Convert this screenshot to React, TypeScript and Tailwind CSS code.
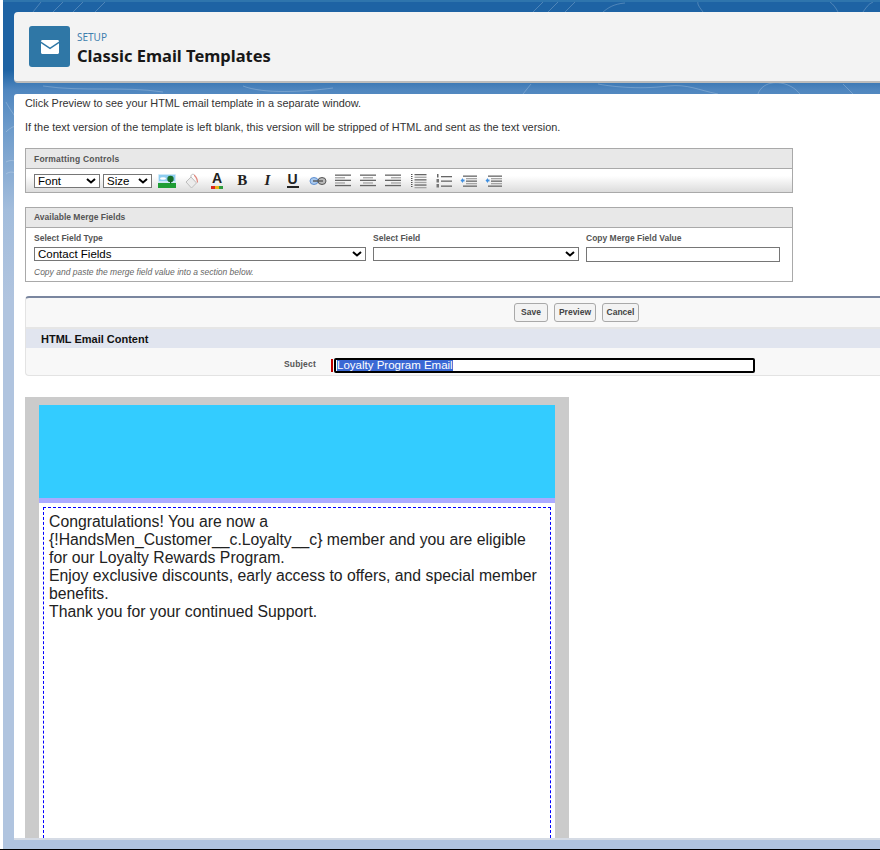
import { ReactNode } from 'react';

const arial = "font-['Liberation_Sans',Arial,sans-serif]";

// horizontal bars used by the align buttons
function Bars({ rows }: { rows: [number, number][] }) {
  return (
    <svg width="20" height="16" viewBox="0 0 20 16">
      {rows.map(([x, w], i) => (
        <rect key={i} x={x} y={1.5 + i * 2.6} width={w} height="1.3" fill={i % 2 ? '#a5a5a5' : '#666'} />
      ))}
    </svg>
  );
}

function ListIcon({ numbered }: { numbered?: boolean }) {
  return (
    <svg width="20" height="16" viewBox="0 0 20 16">
      {numbered ? (
        <>
          <rect x="3" y="1" width="1.500" height="3.500" fill="#666" />
          <rect x="2.500" y="6" width="2.500" height="3.500" fill="#777" />
          <rect x="2.500" y="11" width="2.500" height="3.500" fill="#777" />
          <rect x="7" y="3" width="11" height="1.300" fill="#666" />
          <rect x="7" y="7.500" width="11" height="1.300" fill="#666" />
          <rect x="7" y="12.500" width="11" height="1.300" fill="#666" />
        </>
      ) : (
        <>
          {[1, 3, 5, 7, 9, 11, 13].map((y) => (
            <rect key={y} x="3" y={y} width="1.500" height="1" fill="#555" />
          ))}
          {[1, 3.600, 6.200, 8.800, 11.400, 14].map((y, i) => (
            <rect key={y} x="6.500" y={y} width="12" height="1.300" fill={i % 2 ? '#a5a5a5' : '#666'} />
          ))}
        </>
      )}
    </svg>
  );
}

function IndentIcon() {
  return (
    <svg width="20" height="16" viewBox="0 0 20 16">
      <path d="M1.500 7.500 4 5v1.500h1.500v2H4V10z" fill="#3f8fe0" />
      <rect x="4" y="2.500" width="14" height="1.300" fill="#666" />
      <rect x="7" y="5" width="11" height="1.300" fill="#a5a5a5" />
      <rect x="7" y="7.500" width="11" height="1.300" fill="#666" />
      <rect x="7" y="10" width="11" height="1.300" fill="#a5a5a5" />
      <rect x="4" y="12.500" width="14" height="1.300" fill="#666" />
    </svg>
  );
}

const tools: ReactNode[] = [
  <svg width="18" height="14" viewBox="0 0 18 14" key="img">
    <rect x="0" y="0" width="18" height="14" rx="1" fill="#cfe9f8" />
    <rect x="1" y="1" width="16" height="6" fill="#8dcdf0" />
    <rect x="0" y="9" width="18" height="5" fill="#1f9e35" />
    <circle cx="12.500" cy="5" r="3.200" fill="#17702a" />
    <rect x="12" y="6" width="1.200" height="3.500" fill="#17602a" />
    <ellipse cx="5" cy="4.500" rx="3" ry="1.300" fill="#fff" />
  </svg>,
  <svg width="18" height="18" viewBox="0 0 18 18" key="fill">
    <path d="M3 10 8 5l5.500 6-5 5z" fill="#ececec" stroke="#bdbdbd" />
    <path d="M8 5C7.500 2.500 10 1.500 11.500 3" fill="none" stroke="#bbb" />
    <path d="M11 2.500c2 1 4 4 4 7 .6 1.500-1.500 1.500-1.200 0-.2-2-1.300-4.500-2.800-5.500z" fill="#e0897f" />
  </svg>,
  <div className="flex flex-col items-center" key="color">
    <span className={`${arial} text-[14px] font-bold leading-[13px] text-[#222]`}>A</span>
    <div className="mt-[1px] flex h-[3px] w-[12px]">
      <div className="w-1/3 bg-[#d8261c]" />
      <div className="w-1/3 bg-[#e9b214]" />
      <div className="w-1/3 bg-[#2f9c3d]" />
    </div>
  </div>,
  <span className="font-['Liberation_Serif',serif] text-[15px] font-bold text-[#222]" key="b">B</span>,
  <span className="font-['Liberation_Serif',serif] text-[15px] font-bold italic text-[#222]" key="i">I</span>,
  <div className="flex flex-col items-center" key="u">
    <span className={`${arial} text-[14px] font-bold leading-[12px] text-[#222]`}>U</span>
    <div className="mt-[1px] h-[2px] w-[12px] bg-[#222]" />
  </div>,
  <svg width="18" height="10" viewBox="0 0 18 10" key="link">
    <ellipse cx="5" cy="5" rx="4" ry="3.500" fill="#a9c9ee" stroke="#5f8fd0" />
    <ellipse cx="13" cy="5" rx="4" ry="3.500" fill="#bbb" stroke="#555" />
    <rect x="4" y="4.300" width="10" height="1.400" fill="#555" />
  </svg>,
  <Bars key="l" rows={[[2, 16], [2, 10], [2, 16], [2, 10], [2, 16]]} />,
  <Bars key="c" rows={[[2, 16], [5, 10], [2, 16], [5, 10], [2, 16]]} />,
  <Bars key="r" rows={[[2, 16], [8, 10], [2, 16], [8, 10], [2, 16]]} />,
  <ListIcon key="ul" />,
  <ListIcon key="ol" numbered />,
  <IndentIcon key="out" />,
  <IndentIcon key="in" />,
];

function FieldLabel({ children }: { children: ReactNode }) {
  return <div className="text-[8.500px] font-bold leading-[12px] text-[#555]">{children}</div>;
}

function PageButton({ children, className }: { children: ReactNode; className: string }) {
  return (
    <button className={`flex h-[19px] items-center justify-center rounded-[3px] border border-[#a9a9a9] bg-[#f3f3f3] text-[8.500px] font-bold text-[#444] ${className}`}>
      {children}
    </button>
  );
}

function FakeSelect({ label, className }: { label?: string; className: string }) {
  return (
    <div className={`flex h-[14px] shrink-0 items-center justify-between border border-[#767676] bg-white pr-[3px] pl-[3px] text-[11.500px] leading-[12px] text-black ${className}`}>
      <span>{label}</span>
      <svg width="10" height="6" viewBox="0 0 10 6" fill="none" stroke="#000" strokeWidth="2">
        <path d="M1 1l4 3.500L9 1" />
      </svg>
    </div>
  );
}

export default function App() {
  return (
    <div className={`${arial} relative flex h-[850px] w-[880px] flex-col overflow-hidden border-b border-black bg-white pl-[3px]`}>
      <div className="relative flex h-full flex-col border-t-2 border-[#2f75ad] bg-[linear-gradient(#1e63a4_0px,#1e63a4_68px,#4f86bf_88px,#6f9ccb_128px,#a3bddc_208px,#b0c4df_298px)] pt-[10px] pl-[11px]">
        {/* contour lines in the page background */}
        <svg className="absolute inset-0" width="877" height="300" viewBox="0 0 877 300" fill="none" stroke="#ffffff" strokeOpacity="0.22">
          <path d="M30 10 38 0M50 10 60 0M70 10 80 0M92 10 102 0M530 10 540 0M545 10 555 0M562 10 572 0M600 10c5-4 10-8 22-9M700 10c-3-4-6-8-5-10M835 10c-2-4-5-8-8-10M860 10c3-4 5-8 10-10" />
          <path d="M528 82 520 92M595 82c10 2 40 6 70 2 20-2 30 4 50 8M755 92c4-12 20-14 32-8 6 3 8 6 10 8M840 82l10 10M3 100c4 8 8 12 11 18M3 130c3-3 7-6 11-6M3 160c4-2 7-2 11 0M3 172c4-3 8-2 11 0M40 84c40 6 80 0 120 6M240 84c20 8 60 6 90 2" />
        </svg>

        {/* Page header */}
        <div className="relative flex h-[71px] shrink-0 items-center gap-[7px] rounded-tl-[4px] rounded-bl-[4px] border-b-2 border-[#bcbcbc] bg-[#f3f3f3] pl-[15px]">
          <div className="flex h-[41px] w-[41px] items-center justify-center rounded-[3px] bg-[#2f77a6]">
            <svg width="18" height="14" viewBox="0 0 18 14">
              <path d="M1.500 0h15c.8 0 1.500.6 1.500 1.400L9 7.500 0 1.400C0 .6.700 0 1.500 0z" fill="#fff" />
              <path d="M0 3.200 9 9.300l9-6.100v9.300c0 .8-.7 1.500-1.500 1.500h-15C.7 14 0 13.300 0 12.500z" fill="#fff" />
            </svg>
          </div>
          <div className="pt-[6px]">
            <div className="font-['Noto_Sans',sans-serif] text-[10px] leading-[12px] text-[#3f7fae]">SETUP</div>
            <div className="font-['Noto_Sans',sans-serif] text-[16.500px] font-bold leading-[26px] text-[#181818]">Classic Email Templates</div>
          </div>
        </div>

        {/* Main panel */}
        <div className="relative mt-[11px] mb-[11px] flex min-h-0 flex-1 flex-col overflow-hidden rounded-tl-[3px] bg-white pt-[2px] pl-[11px] shadow-[0_2px_0_#d5dbe5]">
          <p className="text-[10.900px] leading-[14px] text-[#333]">Click Preview to see your HTML email template in a separate window.</p>
          <p className="mt-[10px] text-[10.900px] leading-[14px] text-[#333]">If the text version of the template is left blank, this version will be stripped of HTML and sent as the text version.</p>

          {/* Formatting controls */}
          <div className="mt-[14px] w-[768px] shrink-0 border border-[#a9a9a9]">
            <div className="flex h-[20px] items-center border-b border-[#a9a9a9] bg-[#e8e8e8] pt-[1px] pl-[8px] text-[8.500px] font-bold tracking-[0.2px] text-[#555]">Formatting Controls</div>
            <div className="flex h-[23px] items-center bg-[linear-gradient(#ffffff,#ffffff_30%,#dcdcdc)] pl-[8px]">
              <FakeSelect label="Font" className="w-[66px]" />
              <FakeSelect label="Size" className="ml-[3px] w-[49px]" />
              <div className="ml-[2px] flex items-center">
                {tools.map((tool, i) => (
                  <div key={i} className="flex h-[20px] w-[25.200px] items-center justify-center">{tool}</div>
                ))}
              </div>
            </div>
          </div>

          {/* Merge fields */}
          <div className="mt-[14px] h-[75px] w-[768px] shrink-0 border border-[#a9a9a9]">
            <div className="flex h-[20px] items-center border-b border-[#a9a9a9] bg-[#e8e8e8] pl-[8px] text-[8.500px] font-bold text-[#555]">Available Merge Fields</div>
            <div className="flex pt-[4px] pl-[8px]">
              <div className="w-[339px]">
                <FieldLabel>Select Field Type</FieldLabel>
                <FakeSelect label="Contact Fields" className="mt-[3px] w-[332px]" />
              </div>
              <div className="w-[213px]">
                <FieldLabel>Select Field</FieldLabel>
                <FakeSelect className="mt-[3px] w-[206px]" />
              </div>
              <div>
                <FieldLabel>Copy Merge Field Value</FieldLabel>
                <input readOnly className="mt-[3px] block h-[15px] w-[194px] border border-[#767676] bg-white" />
              </div>
            </div>
            <p className="mt-[4px] pl-[8px] text-[8.500px] italic leading-[12px] text-[#666]">Copy and paste the merge field value into a section below.</p>
          </div>

          {/* Page block, runs past the right edge of the window */}
          <div className="mt-[14px] h-[80px] w-[1102px] shrink-0 overflow-hidden rounded-tl-[4px] rounded-bl-[4px] border-t-2 border-b border-l border-[#e3e3e3] border-t-[#7a869f] bg-[#f8f8f8]">
            <div className="flex h-[31px] items-center justify-center gap-[6px] border-b-2 border-[#e6e6e6]">
              <PageButton className="w-[34px]">Save</PageButton>
              <PageButton className="w-[42px]">Preview</PageButton>
              <PageButton className="w-[37px]">Cancel</PageButton>
            </div>
            <div className="flex h-[19px] items-center bg-[#e1e5ef] pt-[1px] pl-[15px] text-[11px] font-bold text-[#111]">HTML Email Content</div>
            <div className="flex items-center pt-[10px]">
              <div className="w-[290px] pb-[3px] text-right text-[8.500px] font-bold tracking-[0.2px] text-[#555]">Subject</div>
              <div className="ml-[15px] h-[13px] w-[2px] bg-[#c00000]" />
              <div className="ml-[1px] flex h-[15px] w-[421px] items-center rounded-[2px] border-2 border-black bg-white pl-[1px]">
                <span className="bg-[#3a68d4] text-[11.500px] leading-[11px] text-white">Loyalty Program Email</span>
              </div>
            </div>
          </div>

          {/* Email template preview */}
          <div className="mt-[21px] flex w-[544px] flex-1 flex-col bg-[#cbcbcb] px-[14px] pt-[8px]">
            <div className="h-[93px] shrink-0 bg-[#33ccff]" />
            <div className="h-[5px] shrink-0 bg-[#aaaaff]" />
            <div className="flex flex-1 flex-col bg-white px-[4px] pt-[4px]">
              <div className="flex-1 border-[1px] border-b-0 border-dashed border-[#0000ff] px-[5px] pt-[5px] text-[15.770px] leading-[18px] text-[#222]">
                Congratulations! You are now a
                <br />
                {'{!HandsMen_Customer__c.Loyalty__c}'} member and you are eligible for our Loyalty Rewards Program.
                <br />
                Enjoy exclusive discounts, early access to offers, and special member benefits.
                <br />
                Thank you for your continued Support.
              </div>
            </div>
          </div>
        </div>
      </div>
    </div>
  );
}
